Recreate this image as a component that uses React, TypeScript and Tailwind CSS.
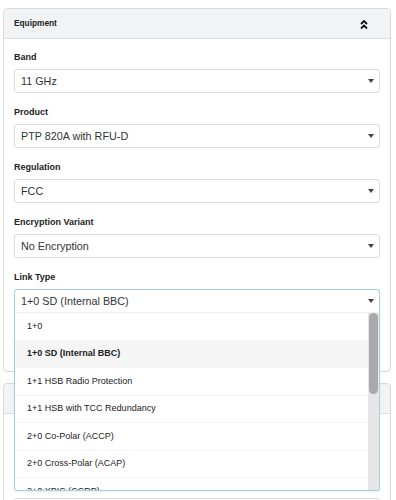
import React from "react";

const Caret = () => (
  <div className="w-0 h-0 border-l-[3.5px] border-r-[3.5px] border-t-[4px] border-l-transparent border-r-transparent border-t-[#444]" />
);

function Field({ label, value, last }: { label: string; value: string; last?: boolean }) {
  return (
    <div className={last ? "" : "mb-[13px]"}>
      <div className="h-[12px] leading-[12px] text-[9px] font-bold text-[#222] mb-[6px]">{label}</div>
      <div className="h-[24px] border border-[#dcdcdc] rounded-[3px] flex items-center justify-between pl-[6px] pr-[5px] bg-white">
        <span className="text-[10.8px] text-[#333]">{value}</span>
        <Caret />
      </div>
    </div>
  );
}

const items = [
  "1+0",
  "1+0 SD (Internal BBC)",
  "1+1 HSB Radio Protection",
  "1+1 HSB with TCC Redundancy",
  "2+0 Co-Polar (ACCP)",
  "2+0 Cross-Polar (ACAP)",
  "2+0 XPIC (CCDP)",
];

export default function App() {
  return (
    <div className="w-[396px] h-[500px] overflow-hidden bg-white font-['Liberation_Sans',Arial,sans-serif]">
      <div className="pt-[8px] pl-[3px] pr-[5px] flex flex-col gap-[11px]">
        {/* Card 1 */}
        <div className="border border-[#d9d9d9] rounded-[4px] bg-white">
          <div className="h-[30px] bg-[#f2f3f5] border-b border-[#dedede] rounded-t-[4px] flex items-center justify-between pl-[10px] pr-[22px]">
            <span className="text-[8.3px] font-bold text-[#222]">Equipment</span>
            <svg width="8" height="11" viewBox="0 0 8 11" className="mt-[1px]">
              <path d="M1 5 L4 2 L7 5" fill="none" stroke="#111" strokeWidth="1.8" />
              <path d="M1 9.5 L4 6.5 L7 9.5" fill="none" stroke="#111" strokeWidth="1.8" />
            </svg>
          </div>
          <div className="px-[10px] pt-[12px] pb-[58px]">
            <Field label="Band" value="11 GHz" />
            <Field label="Product" value="PTP 820A with RFU-D" />
            <Field label="Regulation" value="FCC" />
            <Field label="Encryption Variant" value="No Encryption" />
            <div>
              <div className="h-[12px] leading-[12px] text-[9px] font-bold text-[#222] mb-[6px]">Link Type</div>
              <div className="relative z-10">
                <div className="h-[24px] border border-[#a3d3e3] border-b-[#f0f0f0] rounded-t-[3px] flex items-center justify-between pl-[6px] pr-[5px] bg-white">
                  <span className="text-[10.8px] text-[#333]">1+0 SD (Internal BBC)</span>
                  <Caret />
                </div>
                <div className="absolute left-0 right-0 top-[24px] h-[178px] border-x border-b border-[#a3d3e3] rounded-b-[3px] bg-white overflow-hidden shadow-[0_1px_2px_rgba(0,0,0,0.08)]">
                  <div className="pr-[11px]">
                    {items.map((it, i) => (
                      <div
                        key={it}
                        className={
                          "h-[27.5px] flex items-center pl-[12px] text-[9px] text-[#222] border-b border-[#f5f5f5] " +
                          (i === 1 ? "bg-[#f5f5f5] font-bold" : "")
                        }
                      >
                        {it}
                      </div>
                    ))}
                  </div>
                  <div className="absolute right-0 top-0 bottom-0 w-[11px] bg-[#e6e6e6]">
                    <div className="ml-[1px] w-[9px] h-[81px] bg-[#a9a9a9] rounded-[5px]" />
                  </div>
                </div>
              </div>
            </div>
          </div>
        </div>
        {/* Card 2 */}
        <div className="border border-[#d9d9d9] rounded-[4px] bg-white h-[200px]">
          <div className="h-[30px] bg-[#f2f3f5] border-b border-[#dedede] rounded-t-[4px]" />
          <div className="px-[10px] pt-[84px]">
            <div className="h-[24px] border border-[#dcdcdc] rounded-[3px]" />
          </div>
        </div>
      </div>
    </div>
  );
}
